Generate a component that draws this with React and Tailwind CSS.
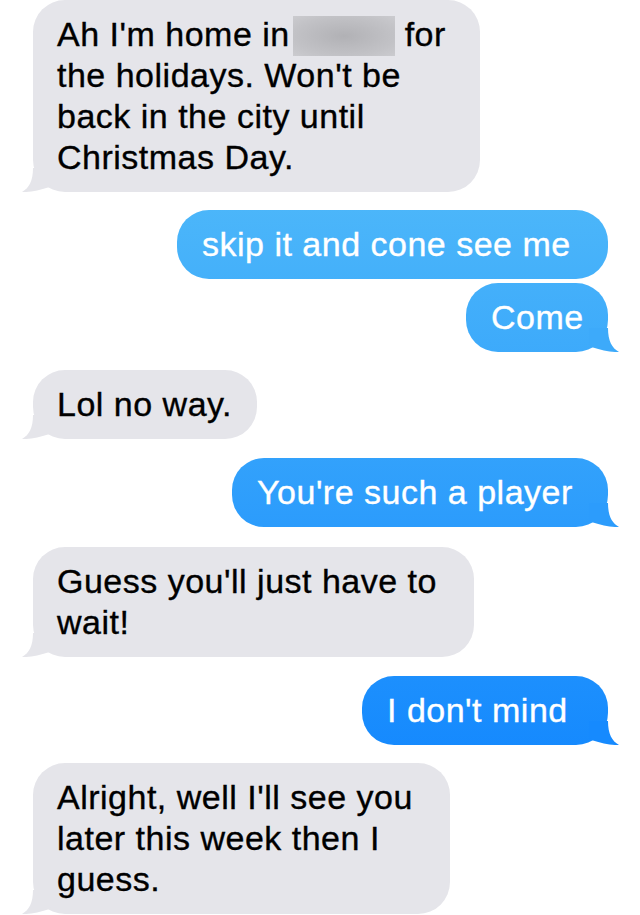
import React from "react";

const Tail = ({ side, color }) => (
  <svg
    width="30"
    height="24"
    viewBox="0 0 30 24"
    className={
      side === "right"
        ? `absolute bottom-0 -right-[11px] ${color}`
        : `absolute bottom-0 -left-[11px] -scale-x-100 ${color}`
    }
  >
    <path
      d="M19,0 C19,13 23,20 30,24 C23,24.5 12,22 4,19.5 L0,17 L0,0 Z"
      fill="currentColor"
    />
  </svg>
);

const Left = ({ width, mt, children }) => (
  <div
    className={`relative self-start ml-[33px] ${width} ${mt} rounded-[32px] bg-[#e5e5ea] pl-[24px] py-[14px] text-black`}
  >
    {children}
    <Tail side="left" color="text-[#e5e5ea]" />
  </div>
);

const Right = ({ width, mt, tail, children }) => (
  <div
    className={`relative self-end mr-[32px] ${width} ${mt} rounded-[32px] bg-[linear-gradient(180deg,#60c7f8,#057cff)] bg-fixed pl-[25px] py-[14px] text-white`}
  >
    {children}
    {tail ? <Tail side="right" color={tail} /> : null}
  </div>
);

const Line = ({ children }) => (
  <div className="whitespace-nowrap [-webkit-text-stroke:0.35px_currentColor]">{children}</div>
);

export default function App() {
  return (
    <div
      className="flex h-[915px] w-[640px] flex-col overflow-hidden bg-white text-[34px] leading-[41px] tracking-[0.5px]"
      style={{ fontFamily: '"Liberation Sans", Arial, sans-serif' }}
    >
      <Left width="w-[447px]" mt="mt-0">
        <Line>
          Ah I'm home in
          <span className="ml-[3px] inline-block h-[40px] w-[102px] translate-y-[2px] align-top bg-[radial-gradient(ellipse_at_center,#b1b1b5_0%,#c2c2c6_70%,#cbcbcf_100%)] blur-[0.6px]" />{" "}
          for
        </Line>
        <Line>the holidays. Won't be</Line>
        <Line>back in the city until</Line>
        <Line>Christmas Day.</Line>
      </Left>

      <Right width="w-[431px]" mt="mt-[18px]">
        <Line>skip it and cone see me</Line>
      </Right>

      <Right width="w-[142px]" mt="mt-[4px]" tail="text-[#3daafa]">
        <Line>Come</Line>
      </Right>

      <Left width="w-[224px]" mt="mt-[18px]">
        <Line>Lol no way.</Line>
      </Left>

      <Right width="w-[376px]" mt="mt-[19px]" tail="text-[#2c9cfc]">
        <Line>You're such a player</Line>
      </Right>

      <Left width="w-[441px]" mt="mt-[20px]">
        <Line>Guess you'll just have to</Line>
        <Line>wait!</Line>
      </Left>

      <Right width="w-[246px]" mt="mt-[19px]" tail="text-[#168afe]">
        <Line>I don't mind</Line>
      </Right>

      <Left width="w-[417px]" mt="mt-[18px]">
        <Line>Alright, well I'll see you</Line>
        <Line>later this week then I</Line>
        <Line>guess.</Line>
      </Left>
    </div>
  );
}
